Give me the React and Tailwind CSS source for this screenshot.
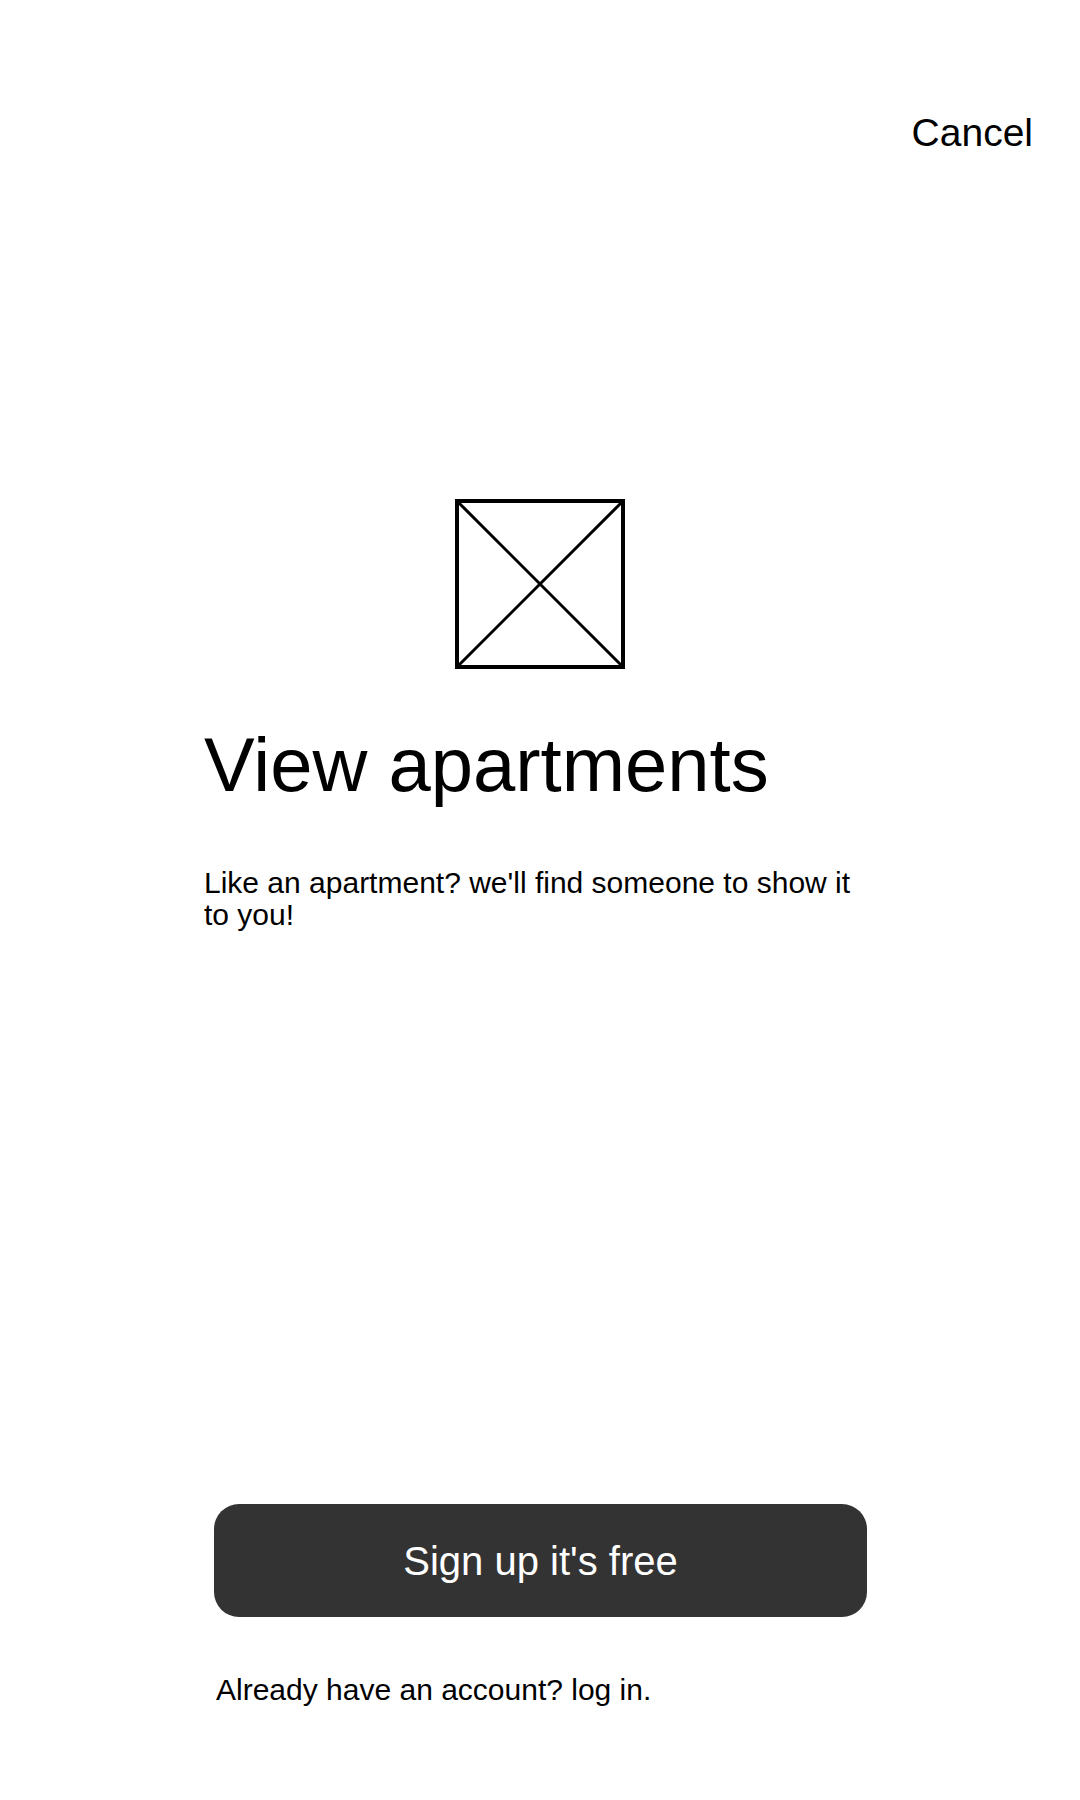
export default function App() {
  return (
    <div
      className="w-[1080px] h-[1800px] bg-white text-black flex flex-col"
      style={{ fontFamily: '"Liberation Sans", Arial, sans-serif' }}
    >
      <div className="flex justify-end pt-[104px] pr-[47px]">
        <span className="text-[39px]">Cancel</span>
      </div>

      <div className="flex justify-center mt-[336px]">
        <svg width="170" height="170" viewBox="0 0 170 170">
          <rect x="2" y="2" width="166" height="166" fill="none" stroke="#000" strokeWidth="4" />
          <line x1="2" y1="2" x2="168" y2="168" stroke="#000" strokeWidth="3" />
          <line x1="168" y1="2" x2="2" y2="168" stroke="#000" strokeWidth="3" />
        </svg>
      </div>

      <div className="pl-[204px] w-[876px]">
        <h1 className="mt-[39px] text-[76px] font-normal">View apartments</h1>
        <p className="mt-[45px] text-[30px] leading-[32px]">
          Like an apartment? we'll find someone to show it to you!
        </p>
      </div>

      <div className="mt-auto pl-[214px]">
        <button className="w-[653px] h-[113px] rounded-[25px] bg-[#333333] text-white text-[40px] flex items-center justify-center">
          Sign up it's free
        </button>
      </div>

      <div className="mt-[50px] pl-[216px] pb-[88px]">
        <span className="text-[30px]">Already have an account? log in.</span>
      </div>
    </div>
  );
}
